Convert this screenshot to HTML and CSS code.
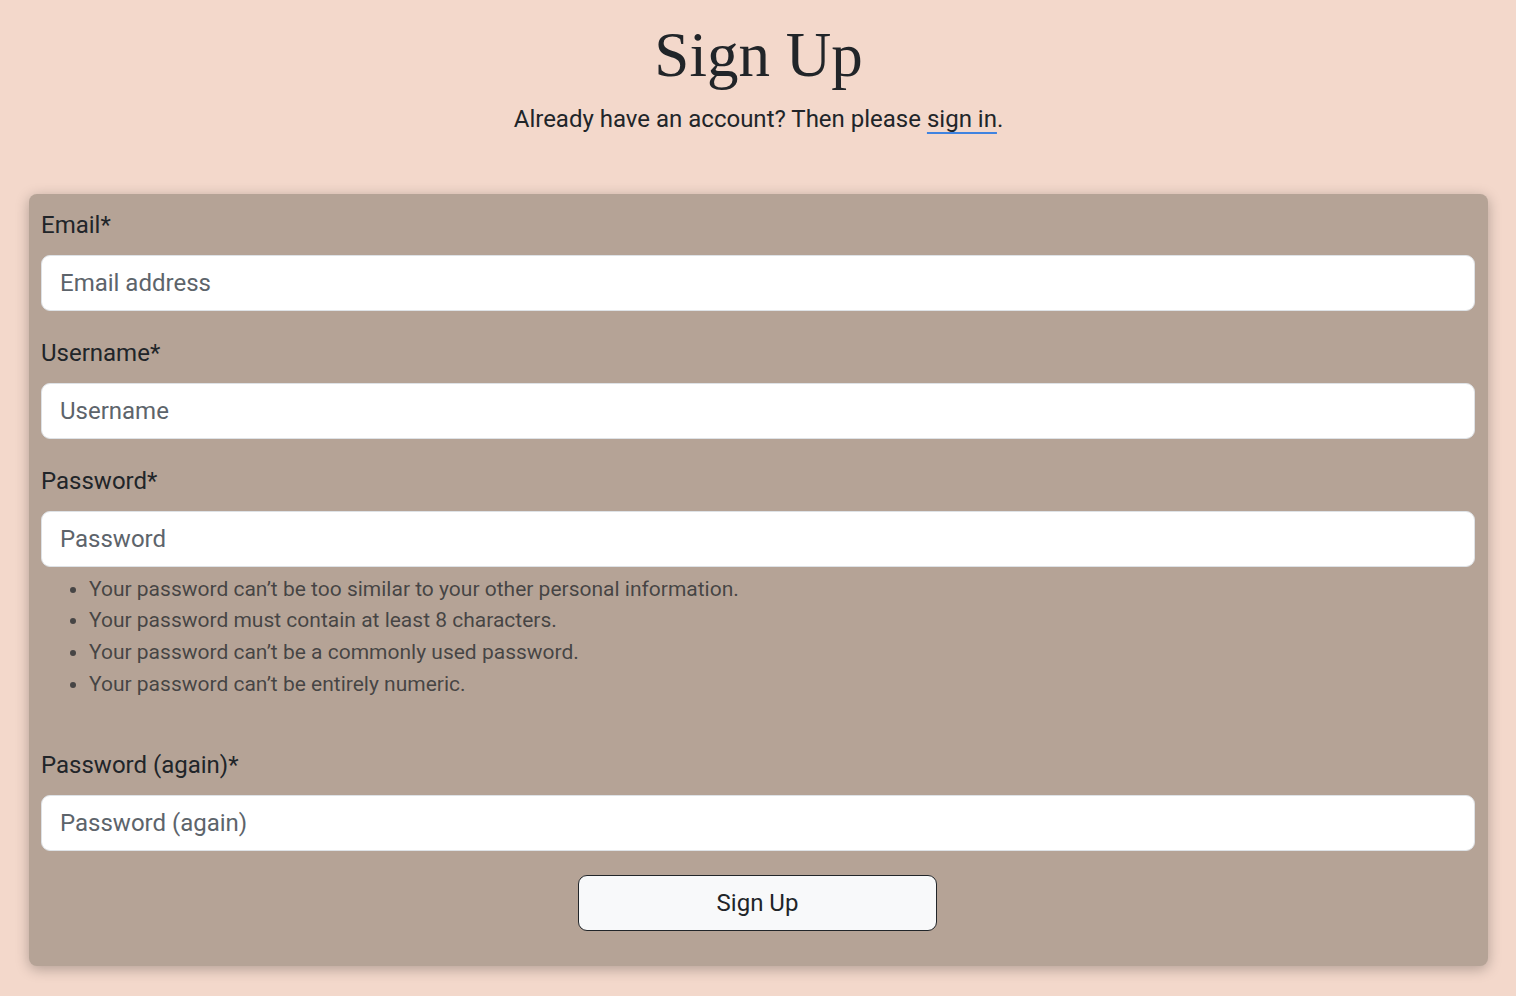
FILE: index.html
```html
<!DOCTYPE html>
<html lang="en">
<head>
<meta charset="utf-8">
<title>Sign Up</title>
<link rel="stylesheet" href="styles.css">
</head>
<body>
<main class="page">
  <header class="intro">
    <h1 class="title">Sign Up</h1>
    <p class="lead">Already have an account? Then please <a class="link" href="#">sign in</a>.</p>
  </header>
  <form class="card">
    <div class="field">
      <label class="label" for="email">Email*</label>
      <input class="input" id="email" type="email" placeholder="Email address">
    </div>
    <div class="field">
      <label class="label" for="username">Username*</label>
      <input class="input" id="username" type="text" placeholder="Username">
    </div>
    <div class="field">
      <label class="label" for="pw1">Password*</label>
      <input class="input" id="pw1" type="password" placeholder="Password">
      <div class="help">
        <ul class="help-list">
          <li>Your password can’t be too similar to your other personal information.</li>
          <li>Your password must contain at least 8 characters.</li>
          <li>Your password can’t be a commonly used password.</li>
          <li>Your password can’t be entirely numeric.</li>
        </ul>
      </div>
    </div>
    <div class="field">
      <label class="label" for="pw2">Password (again)*</label>
      <input class="input" id="pw2" type="password" placeholder="Password (again)">
    </div>
    <div class="actions">
      <button class="btn" type="submit">Sign Up</button>
    </div>
  </form>
</main>
</body>
</html>
```

FILE: styles.css
```css
html, body {
  margin: 0;
  padding: 0;
}
body {
  background: #f3d8cb;
  color: #212529;
  font-family: Roboto, "Liberation Sans", sans-serif;
  font-size: 24px;
  line-height: 1.5;
}
.page {
  padding: 18px 28px 29px 29px;
}
.intro {
  text-align: center;
}
.title {
  margin: 0;
  font-family: "Liberation Serif", "DejaVu Serif", serif;
  font-weight: 400;
  font-size: 63px;
  line-height: 1.2;
  color: #212529;
}
.lead {
  margin: 7px 0 0;
}
.link {
  color: #212529;
  text-decoration: underline;
  text-decoration-color: #3f83e0;
  text-decoration-thickness: 2px;
  text-underline-offset: 5px;
}
.card {
  margin-top: 57px;
  background: #b5a396;
  border-radius: 8px;
  box-shadow: 0 3px 14px rgba(0, 0, 0, 0.28);
  padding: 13px 13px 11px 12px;
}
.field {
  margin-bottom: 24px;
}
.label {
  display: block;
  margin-bottom: 12px;
}
.input {
  display: block;
  box-sizing: border-box;
  width: 100%;
  height: 56px;
  padding: 9px 18px;
  font-family: inherit;
  font-size: 24px;
  color: #212529;
  background: #fff;
  border: 1px solid #dee2e6;
  border-radius: 9px;
  outline: none;
}
.input::placeholder {
  color: #5d646b;
  opacity: 1;
}
.help {
  margin-top: 7px;
  font-size: 21px;
  line-height: 31.7px;
  color: rgba(33, 37, 41, 0.75);
}
.help-list {
  margin: 0 0 47px;
  padding-left: 48px;
}
.actions {
  display: flex;
  justify-content: center;
  margin-bottom: 24px;
}
.btn {
  width: 359px;
  height: 56px;
  margin-left: -1px;
  font-family: inherit;
  font-size: 24px;
  color: #212529;
  background: #f8f9fa;
  border: 1px solid #212529;
  border-radius: 9px;
  cursor: pointer;
}
```
